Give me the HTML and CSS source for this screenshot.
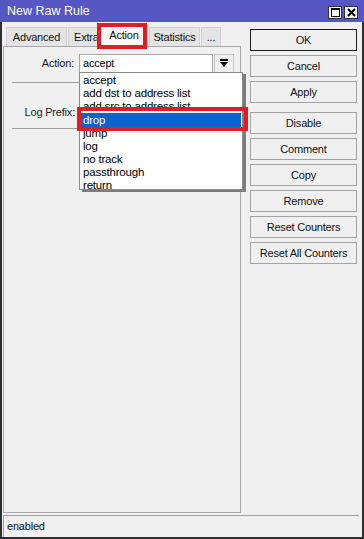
FILE: index.html
```html
<!DOCTYPE html>
<html lang="en">
<head>
    <meta charset="UTF-8">
    <title>New Raw Rule</title>
    <link rel="stylesheet" href="styles.css">
</head>
<body>
    <div class="window">
        <div class="titlebar">
            <span>New Raw Rule</span>
            <div class="title-btns">
                <span class="tbtn"><span class="max-box"></span></span>
                <span class="tbtn">
                    <svg width="9" height="9" viewBox="0 0 9 9"><path d="M1 1 L8 8 M8 1 L1 8" stroke="#000" stroke-width="2"/></svg>
                </span>
            </div>
        </div>

        <div class="frame">
            <div class="main">
                <div class="left">
                    <div class="tabs">
                        <div class="tab tab-adv">Advanced</div>
                        <div class="tab tab-extra">Extra</div>
                        <div class="tab tab-action active">Action</div>
                        <div class="tab tab-stats">Statistics</div>
                        <div class="tab tab-more">...</div>
                    </div>
                    <div class="panel">
                        <div class="field-row">
                            <label class="field-label">Action:</label>
                            <div class="select">accept</div>
                            <div class="select-btn">
                                <svg width="8" height="9" viewBox="0 0 8 9"><rect x="0" y="0" width="8" height="2" fill="#000"/><path d="M0 3 H8 L4 8 Z" fill="#000"/></svg>
                            </div>
                        </div>
                        <div class="sep"></div>
                        <div class="field-row log-row">
                            <label class="field-label">Log Prefix:</label>
                        </div>
                        <div class="sep"></div>
                    </div>
                </div>

                <!-- Dialog buttons -->
                <div class="buttons">
                    <div class="btn btn-default">OK</div>
                    <div class="btn">Cancel</div>
                    <div class="btn">Apply</div>
                    <div class="btn btn-group">Disable</div>
                    <div class="btn">Comment</div>
                    <div class="btn">Copy</div>
                    <div class="btn">Remove</div>
                    <div class="btn">Reset Counters</div>
                    <div class="btn">Reset All Counters</div>
                </div>
            </div>
            <div class="status">enabled</div>
        </div>

        <!-- Open dropdown list -->
        <ul class="dropdown">
            <li>accept</li>
            <li>add dst to address list</li>
            <li>add src to address list</li>
            <li class="selected">drop</li>
            <li>jump</li>
            <li>log</li>
            <li>no track</li>
            <li>passthrough</li>
            <li>return</li>
        </ul>

        <!-- Red highlight marks -->
        <div class="mark mark-tab"></div>
        <div class="mark mark-drop"></div>
    </div>
</body>
</html>
```

FILE: styles.css
```css
body {
    margin: 0;
    font-family: "Liberation Sans", Arial, sans-serif;
    font-size: 11px;
    letter-spacing: -0.2px;
    color: #000;
}

.window {
    position: relative;
    width: 364px;
    height: 539px;
    display: flex;
    flex-direction: column;
    background-color: #f0f0f0;
}

/* Title bar */
.titlebar {
    height: 22px;
    flex-shrink: 0;
    background-color: #5656c4;
    color: white;
    font-size: 12.5px;
    letter-spacing: 0;
    display: flex;
    align-items: center;
    padding: 0 6px 0 7px;
}

.title-btns {
    margin-left: auto;
    display: flex;
    gap: 2px;
    padding-top: 2px;
}

.tbtn {
    width: 12px;
    height: 11px;
    background-color: #f4f4f4;
    border: 1px solid #333;
    display: flex;
    align-items: center;
    justify-content: center;
}

.max-box {
    width: 7px;
    height: 6px;
    border: 1px solid #000;
    border-top-width: 2px;
}

.frame {
    flex: 1;
    display: flex;
    flex-direction: column;
    border: 2px solid #2e2e2e;
    border-top: none;
}

.main {
    flex: 1;
    display: flex;
    padding-left: 1px;
    padding-bottom: 2px;
}

.left {
    width: 238px;
    display: flex;
    flex-direction: column;
}

/* Tabs */
.tabs {
    display: flex;
    gap: 1px;
    margin-top: 5px;
    padding-left: 3px;
    height: 19px;
}

.tab {
    box-sizing: border-box;
    height: 19px;
    line-height: 18px;
    text-align: center;
    background-color: #e4e4e4;
    border: 1px solid #d2d2d2;
    border-bottom: none;
    color: #111;
}

.tab-adv { width: 61px; }
.tab-extra { width: 31px; text-align: left; padding-left: 5px; }
.tab-action { width: 48px; }
.tab-stats { width: 51px; }
.tab-more { width: 20px; }

.tab.active {
    background-color: #fafafa;
    height: 21px;
    margin-top: -2px;
    line-height: 19px;
}

.panel {
    flex: 1;
    border: 1px solid #a8a8a8;
    padding-top: 7px;
}

.field-row {
    display: flex;
    height: 19px;
    align-items: stretch;
}

.field-label {
    width: 70px;
    margin-right: 5px;
    text-align: right;
    line-height: 19px;
    color: #222;
}

.select {
    box-sizing: border-box;
    width: 134px;
    background-color: white;
    border: 1px solid #a6a6a6;
    padding-left: 3px;
    line-height: 17px;
}

.select-btn {
    box-sizing: border-box;
    width: 20px;
    margin-left: 1px;
    border: 1px solid #c4c4c4;
    background-color: #efefef;
    display: flex;
    align-items: center;
    justify-content: center;
}

.sep {
    height: 1px;
    background-color: #a0a0a0;
    margin: 9px 2px 0 8px;
}

.log-row {
    margin-top: 19px;
    height: 20px;
}

.log-row .field-label {
    width: 71px;
    line-height: 20px;
}

.log-row + .sep {
    margin-top: 6px;
}

/* Right side buttons */
.buttons {
    width: 107px;
    margin-left: 9px;
    padding-top: 7px;
    display: flex;
    flex-direction: column;
    gap: 4px;
}

.btn {
    box-sizing: border-box;
    height: 22px;
    line-height: 20px;
    text-align: center;
    background-color: #f0f0f0;
    border: 1px solid #a2a2a2;
    color: #111;
}

.btn-default {
    border-color: #1a1a1a;
}

.btn-group { margin-top: 5px; }

/* Status bar */
.status {
    height: 22px;
    box-sizing: border-box;
    margin: 0 3px 0 1px;
    border-top: 1px solid #a0a0a0;
    border-left: 1px solid #a0a0a0;
    padding-left: 3px;
    line-height: 20px;
    color: #111;
}

/* Dropdown list lies over the panel */
.dropdown {
    position: absolute;
    left: 79px;
    top: 72px;
    width: 164px;
    height: 118px;
    box-sizing: border-box;
    margin: 0;
    padding: 1px 0 0 0;
    list-style: none;
    background-color: white;
    border: 1px solid #8a8a8a;
    box-shadow: 3px 2px 0 #7c7c7c;
    font-size: 11.5px;
}

.dropdown li {
    height: 13px;
    line-height: 13px;
    padding-left: 2px;
    margin: 0 1px;
    white-space: nowrap;
    overflow: hidden;
}

.dropdown li.selected {
    background-color: #0a64cc;
    color: white;
    height: 14px;
    line-height: 14px;
}

.mark {
    position: absolute;
    border: 4px solid #e31b23;
}

.mark-tab {
    left: 97px;
    top: 23px;
    width: 42px;
    height: 18px;
}

.mark-drop {
    left: 77px;
    top: 107px;
    width: 163px;
    height: 16px;
}
```
